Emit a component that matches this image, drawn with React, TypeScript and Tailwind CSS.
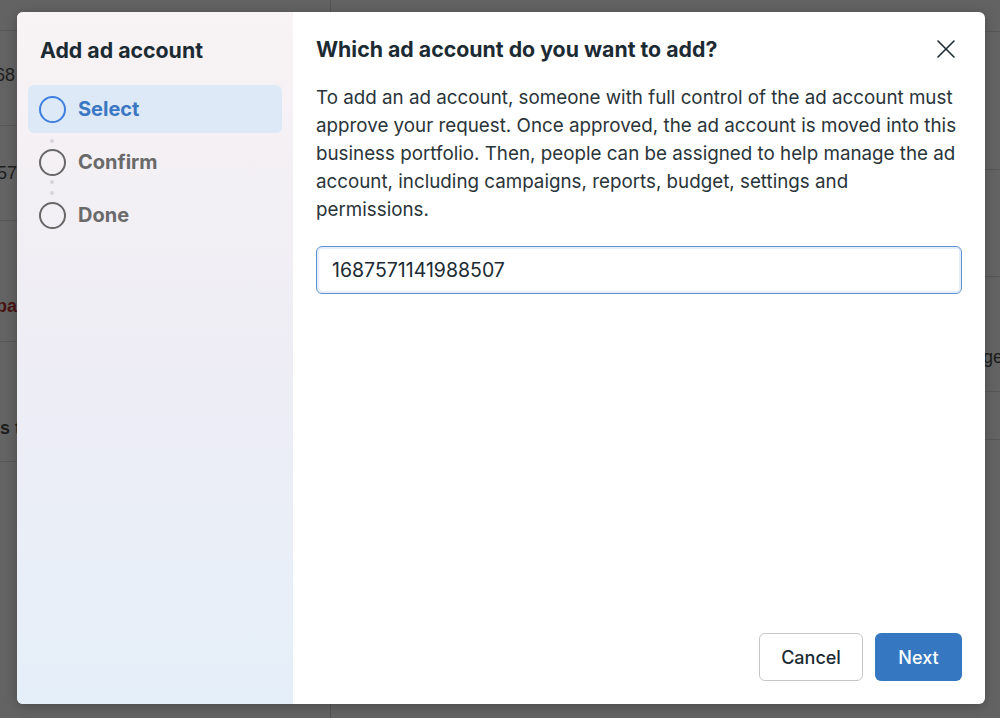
const HEADING_FONT = "font-['Inter','Liberation_Sans',sans-serif]";
const BODY_FONT = "font-['Inter','Liberation_Sans',sans-serif]";
const BACK_FONT = "font-['Liberation_Sans','Arial',sans-serif]";

type StepState = 'active' | 'idle';

interface Step {
  label: string;
  state: StepState;
}

const STEPS: Step[] = [
  { label: 'Select', state: 'active' },
  { label: 'Confirm', state: 'idle' },
  { label: 'Done', state: 'idle' },
];

function StepRow({ step }: { step: Step }) {
  const active = step.state === 'active';

  return (
    <div
      className={`flex h-12 items-center gap-3 rounded-md pl-[11px] ${active ? 'bg-[#dde9f6]' : ''}`}
    >
      <span
        className={`h-[27px] w-[27px] shrink-0 rounded-full border-[2.5px] ${active ? 'border-[#3f7fe0]' : 'border-[#676767]'}`}
      />
      <span
        className={`text-[20px] font-bold ${HEADING_FONT} ${active ? 'text-[#3b77c3]' : 'text-[#6a6a6a]'}`}
      >
        {step.label}
      </span>
    </div>
  );
}

function Dot() {
  return <span className="block h-[4px] w-[4px] rounded-full bg-[#d6d6da]" />;
}

function CloseIcon() {
  return (
    <svg width="18" height="18" viewBox="0 0 18 18" fill="none" stroke="currentColor" strokeWidth="1.6" strokeLinecap="round">
      <path d="M1 1L17 17M17 1L1 17" />
    </svg>
  );
}

function Backdrop() {
  return (
    <div className={`flex h-full w-full ${BACK_FONT} text-[18px]`}>
      <div className="flex w-[331px] shrink-0 flex-col border-r border-[#535353]">
        <div className="h-[31px] border-b border-[#575757]" />
        <div className="flex h-[95px] items-center border-b border-[#575757] pb-[6px]">
          <div className="flex w-[15px] justify-end overflow-hidden whitespace-nowrap text-[#1e1e1e]">1234568</div>
        </div>
        <div className="flex h-[95px] items-center border-b border-[#575757]">
          <div className="flex w-[17px] justify-end overflow-hidden whitespace-nowrap text-[#1e1e1e]">4557</div>
        </div>
        <div className="flex h-[121px] items-end border-b border-[#575757] pb-[21px]">
          <div className="flex w-[17px] justify-end overflow-hidden whitespace-nowrap font-bold text-[#4a1414]">Campa</div>
        </div>
        <div className="flex h-[120px] items-end border-b border-[#575757] pb-[19px]">
          <div className="flex w-[17px] justify-start overflow-hidden whitespace-nowrap font-bold text-[#1e1e1e]">s to</div>
        </div>
      </div>
      <div className="flex flex-1 flex-col">
        <div className="h-[32px] border-b border-[#575757]" />
        <div className="h-[138px] border-b border-[#575757]" />
        <div className="h-[107px] border-b border-[#575757]" />
        <div className="flex h-[115px] items-center border-b border-[#575757] pl-[652px] pt-[47px]">
          <span className="whitespace-nowrap text-[#1e1e1e]">ge</span>
        </div>
        <div className="h-[48px] border-b border-[#575757]" />
      </div>
    </div>
  );
}

export default function App() {
  return (
    <div className="relative h-[718px] w-[1000px] overflow-hidden bg-[#636363]">
      <Backdrop />

      <div className="absolute left-[17px] top-[12px] flex h-[692px] w-[968px] overflow-hidden rounded-md bg-white shadow-[0_2px_12px_rgba(0,0,0,0.25)]">
        <aside className="flex w-[276px] shrink-0 flex-col bg-gradient-to-b from-[#f8f3f4] via-[#eeedf5] to-[#e5eff9]">
          <h2 className={`${HEADING_FONT} pl-[23px] pt-[24px] text-[21.3px] font-bold leading-[28px] text-[#1c2b33]`}>
            Add ad account
          </h2>

          <div className="relative mx-[11px] mt-[21px] flex flex-col gap-[5px]">
            {STEPS.map((step) => (
              <StepRow key={step.label} step={step} />
            ))}
            <div className="absolute left-[22px] top-[54px]">
              <Dot />
            </div>
            <div className="absolute left-[22px] top-[95px] flex flex-col gap-[7px]">
              <Dot />
              <Dot />
            </div>
          </div>
        </aside>

        <section className="flex flex-1 flex-col pb-[23px] pl-[23px] pr-[23px] pt-[22px]">
          <div className="flex items-center justify-between">
            <h1 className={`${HEADING_FONT} text-[21.3px] font-bold leading-[30px] text-[#1c2b33]`}>
              Which ad account do you want to add?
            </h1>
            <button className="mr-[7px] flex h-[18px] w-[18px] items-center justify-center text-[#1c2b33]">
              <CloseIcon />
            </button>
          </div>

          <p className={`${BODY_FONT} mt-[20px] text-[18.8px] leading-[28px] text-[#2a3439]`}>
            To add an ad account, someone with full control of the ad account must approve your request. Once approved, the ad account is moved into this business portfolio. Then, people can be assigned to help manage the ad account, including campaigns, reports, budget, settings and permissions.
          </p>

          <input
            readOnly
            value="1687571141988507"
            className={`${BODY_FONT} mt-[22px] h-12 w-full rounded-md border-[1.5px] border-[#5d92d2] px-[15px] text-[19.5px] text-[#1c2b33] shadow-[inset_0_0_0_2px_#e6eff9] outline-none`}
          />

          <div className="mt-auto flex justify-end gap-3">
            <button
              className={`${HEADING_FONT} h-12 w-[104px] rounded-md border border-[#c6c6ca] bg-white text-[18px] font-medium text-[#1c2b33]`}
            >
              Cancel
            </button>
            <button
              className={`${HEADING_FONT} h-12 w-[87px] rounded-md bg-[#3578c1] text-[18px] font-medium text-white`}
            >
              Next
            </button>
          </div>
        </section>
      </div>
    </div>
  );
}
